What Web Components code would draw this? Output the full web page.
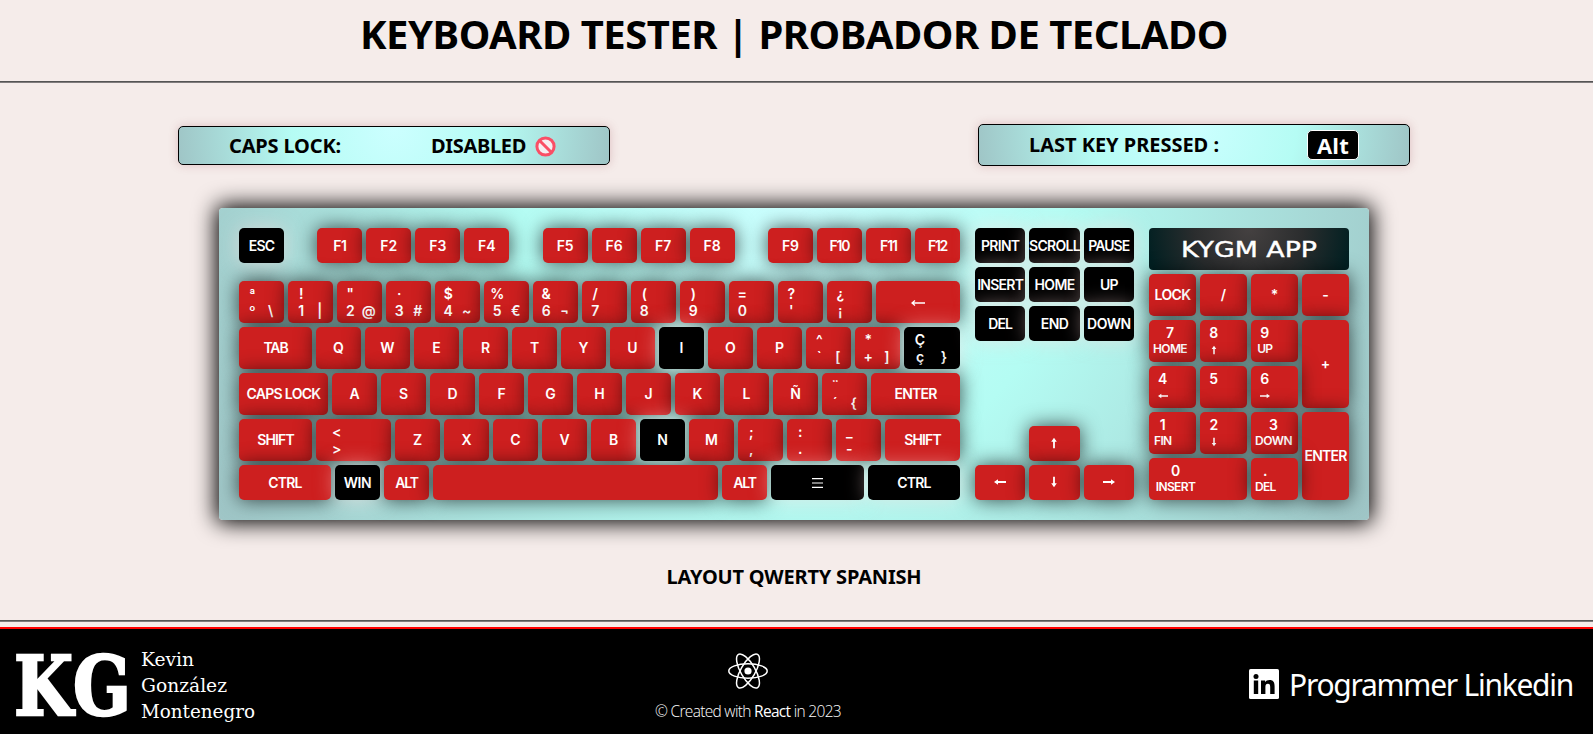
<!DOCTYPE html>
<html lang="en">
<head>
<meta charset="utf-8">
<title>Keyboard Tester</title>
<style>
  html, body { margin: 0; height: 100%; }
  body { background: #f5ecea; color: #000; font-family: "Noto Sans", "Open Sans", sans-serif; overflow: hidden; }
</style>
</head>
<body>
<tester-app></tester-app>
<script>
const define = (name, html, setup) => {
  const template = document.createElement('template');
  template.innerHTML = html.trim();
  customElements.define(name, class extends HTMLElement {
    connectedCallback() {
      if (this.shadowRoot) return;
      this.attachShadow({ mode: 'open' }).append(template.content.cloneNode(true));
      if (setup) setup(this, this.shadowRoot);
    }
  });
};

/* Text set to an exact measure, by tracking or by horizontal scale */
define('fit-text', `<style>
    :host { display: inline-block; white-space: normal; text-align: left; }
    span { display: inline-block; white-space: pre; transform-origin: 0 50%; vertical-align: top; }
  </style><span><slot></slot></span>`, (host, root) => {
  const span = root.querySelector('span');
  const want = parseFloat(host.getAttribute('w'));
  if (!want) return;
  const natural = span.getBoundingClientRect().width;
  host.style.width = want + 'px';
  if (host.hasAttribute('scale')) span.style.transform = 'scaleX(' + want / natural + ')';
  else span.style.letterSpacing = (want - natural) / (host.textContent.length) + 'px';
});

const arrows = {
  left: 'M0 6L4 3.2V5.1H12V6.9H4V8.8Z', right: 'M12 6L8 3.2V5.1H0V6.9H8V8.8Z',
  up: 'M6 .8L8.8 4.8H6.9V11.2H5.1V4.8H3.2Z', down: 'M6 11.2L8.8 7.2H6.9V.8H5.1V7.2H3.2Z'
};
const glyph = t => {
  if (arrows[t]) return '<svg viewBox="0 0 12 12" fill="#fff"><path d="' + arrows[t] + '"/></svg>';
  if (t === 'back') return '<svg class="wide" viewBox="0 0 14 10" fill="none" stroke="#fff" stroke-width="1.3"><path d="M.8 6H14M4 3.6L1 6L4 8.4"/></svg>';
  if (t === 'menu') return '<svg class="menu" viewBox="0 0 11 11" fill="none" stroke="#fff" stroke-width="1.2"><path d="M0 1.6H11M0 6H11M0 10.3H11"/></svg>';
  return null;
};
const widths = { TAB: 24, ESC: 25.5, 'CAPS LOCK': 74, SHIFT: 36.5, CTRL: 33.5, WIN: 27.5, ALT: 22.5, ENTER: 42, PRINT: 38.5,
  SCROLL: 51, PAUSE: 41, INSERT: 46, HOME: 40, UP: 17.5, DEL: 24, END: 27.5, DOWN: 43.5, LOCK: 36, F1: 13, F10: 20, F11: 17, F12: 19 };
const small = { HOME: 34, UP: 15, FIN: 17.5, DOWN: 37, INSERT: 39.5, DEL: 20.5 };

define('kb-key', `<style>
    :host { display: flex; box-sizing: border-box; align-items: center; justify-content: center; min-width: 0; padding-bottom: 1px;
      border-radius: 5px; background: #cd1f1f; color: #fff; font: 600 14px/17px Inter, sans-serif;
      box-shadow: 0 0 20px rgba(0,0,0,.7); white-space: pre; }
    :host([on]) { background: #000; box-shadow: 0 0 20px rgba(255,218,218,.52); }
    :host([multi]) { display: grid; grid-template-columns: 1fr 1fr; grid-template-rows: 17px 17px; padding: 4px;
      align-content: start; align-items: center; justify-items: center; justify-content: stretch; }
    .s { font-weight: 600; font-size: 12px; line-height: 15px; margin-top: -2px; }
    svg { width: 12px; height: 12px; display: block; }
    svg.wide { width: 14px; height: 10px; }
    svg.menu { width: 11px; height: 11px; }
    .s svg { width: 10px; height: 10px; margin-top: 3px; }
  </style>`, (host, root) => {
  const parts = JSON.parse(host.getAttribute('label'));
  const pad = host.hasAttribute('pad');
  if (parts.length > 1) host.setAttribute('multi', '');
  parts.forEach((t, i) => {
    const box = document.createElement('div');
    const g = glyph(t);
    const sub = pad && i === 2;
    if (sub) box.className = 's';
    root.append(box);
    if (g) box.innerHTML = g;
    else {
      const w = sub ? small[t] : widths[t];
      if (w) {
        const f = document.createElement('fit-text');
        f.setAttribute('w', w);
        f.textContent = t;
        box.append(f);
      } else box.textContent = t;
    }
  });
});

const W = 45;
const key = (label, w = W, on = false, extra = '') => {
  const l = JSON.stringify([].concat(label)).replace(/&/g, '&amp;').replace(/"/g, '&quot;');
  return `<kb-key label="${l}" ${on ? 'on' : ''} ${extra} ${w ? 'style="width:' + w + 'px"' : ''}></kb-key>`;
};
const row = (...k) => '<div class="row">' + k.join('') + '</div>';
/* legend order in a multi key: shifted, (blank), base, alt */
const m = (a, b, c = '') => [a, '', b, c];
const letters = (s, on = '') => [...s].map(c => key(c, W, c === on)).join('');

define('kb-board', `<style>
    :host { display: flex; box-sizing: border-box; width: 1150px; height: 312px; padding: 20px; gap: 15px; border-radius: 4px;
      background: radial-gradient(circle at top, #cff 0%, #b4fcf3 42%, #9fc5c6 100%);
      box-shadow: 0 0 22px 3px #000; }
    .main { width: 721px; display: flex; flex-direction: column; gap: 4px; }
    .row { display: flex; gap: 4px; height: 42px; }
    .row.f { height: 35px; justify-content: space-between; margin-bottom: 14px; }
    .row.f div { display: flex; gap: 4px; }
    .row:last-child { height: 35px; }
    .nav { width: 159px; display: grid; grid-template-columns: repeat(3, 1fr); grid-template-rows: 35px 35px 35px 116px 35px; gap: 4px; }
    .nav .up { grid-area: 4 / 2; align-self: end; height: 35px; }
    .nav .l { grid-area: 5 / 1; }
    .nav .d { grid-area: 5 / 2; }
    .nav .r { grid-area: 5 / 3; }
    .pad { width: 200px; display: grid; grid-template-columns: repeat(4, 47px); grid-template-rows: repeat(6, 42px); gap: 4px; }
    .brand { grid-column: span 4; border-radius: 4px; background: radial-gradient(circle at top, #454141 0%, #2b2d2e 50%, #022022 95%);
      display: flex; align-items: center; justify-content: center; color: #fff; font: 500 21px/24px "DejaVu Sans", sans-serif; -webkit-text-stroke: .4px #fff; }
    .brand fit-text { position: relative; top: 1px; }
  </style>
  <div class="main">
    <div class="row f">${key('ESC', W, true)}
      <div>${['F1','F2','F3','F4'].map(k => key(k)).join('')}</div>
      <div>${['F5','F6','F7','F8'].map(k => key(k)).join('')}</div>
      <div>${['F9','F10','F11','F12'].map(k => key(k)).join('')}</div>
    </div>
    ${row(...[['ª','º','\\'],['!','1','|'],['"','2','@'],['·','3','#'],['$','4','~'],['%','5','€'],['&','6','¬'],['/','7'],['(','8'],[')','9'],['=','0'],['?',"'"],['¿','¡']].map(a => key(m(...a))), key('back', 84))}
    ${row(key('TAB', 73), letters('QWERTYUIOP', 'I'), key(m('^','`','[')), key(m('*','+',']')), key(m('Ç','ç','}'), 56, true))}
    ${row(key('CAPS LOCK', 89), letters('ASDFGHJKLÑ'), key(m('¨','´','{')), key('ENTER', 89))}
    ${row(key('SHIFT', 73), key(m('<','>'), 75), letters('ZXCVBNM', 'N'), key(m(';',',')), key(m(':','.')), key(m('_','-')), key('SHIFT', 75))}
    ${row(key('CTRL', 92), key('WIN', W, true), key('ALT'), key('', 285), key('ALT'), key('menu', 93, true), key('CTRL', 92, true))}
  </div>
  <div class="nav">
    ${['PRINT','SCROLL','PAUSE','INSERT','HOME','UP','DEL','END','DOWN'].map(k => key(k, 0, true)).join('')}
    ${key('up', 0, false, 'class="up"')}
    ${key('left', 0, false, 'class="l"')}${key('down', 0, false, 'class="d"')}${key('right', 0, false, 'class="r"')}
  </div>
  <div class="pad">
    <div class="brand"><fit-text w="136" scale>KYGM APP</fit-text></div>
    ${key('LOCK', 0)}${key('/', 0)}${key('*', 0)}${key('-', 0)}
    ${key(m('7','HOME'), 0, false, 'pad')}${key(m('8','up'), 0, false, 'pad')}${key(m('9','UP'), 0, false, 'pad')}<kb-key label='["+"]' style="grid-row: span 2"></kb-key>
    ${key(m('4','left'), 0, false, 'pad')}${key(m('5',''), 0, false, 'pad')}${key(m('6','right'), 0, false, 'pad')}
    ${key(m('1','FIN'), 0, false, 'pad')}${key(m('2','down'), 0, false, 'pad')}${key(m('3','DOWN'), 0, false, 'pad')}<kb-key label='["ENTER"]' style="grid-row: span 2"></kb-key>
    <kb-key label='["0","","INSERT",""]' pad style="grid-column: span 2"></kb-key>${key(m('.','DEL'), 0, false, 'pad')}
  </div>`);

define('status-panel', `<style>
    :host { display: flex; box-sizing: border-box; width: 432px; align-items: center; justify-content: space-between;
      padding: 0 52px 0 50px; border: 1px solid #000; border-radius: 5px; font: 700 20px/24px "Noto Sans", sans-serif;
      background: radial-gradient(circle at top, #cff 0%, #b5fcf4 47%, #9fc5c6 100%); box-shadow: 0 0 10px rgba(150,60,70,.25); }
  </style><slot></slot>`);

define('key-cap', `<style>
    :host { display: flex; box-sizing: border-box; width: 52px; height: 30px; align-items: center; justify-content: center;
      border: 1px solid #fff; border-radius: 5px; background: #000; color: #fff; font: 700 22px/28px "Open Sans", sans-serif; }
  </style><slot></slot>`);

define('page-rule', `<style>:host { display: block; height: 2px; flex: none; background: linear-gradient(#555 50%, #807c7d 50%); }</style>`);

define('site-footer', `<style>
    :host { display: flex; box-sizing: border-box; height: 107px; border-top: 2px solid #f00; background: #000; color: #fff; }
    .brand { display: flex; width: 545px; padding-left: 15px; }
    .logo { width: 126px; font: 700 82px/114px "DejaVu Serif", serif; height: 105px; -webkit-text-stroke: 2.5px #fff; }
    .logo fit-text { margin-left: -1px; }
    .names { display: flex; flex-direction: column; padding-top: 17px; font: 400 19px/26px "DejaVu Serif", serif; }
    .made { width: 376px; display: flex; flex-direction: column; align-items: center; padding-top: 22px; font: 300 15.5px/20px "Open Sans", sans-serif; }
    .made b { font-weight: 400; }
    .made svg { flex: none; margin-bottom: 10px; }
    .link { flex: 1; display: flex; justify-content: flex-end; align-items: flex-start; padding: 33px 20px 0 0; font: 400 30px/46px "Noto Sans", sans-serif; }
    .link svg { flex: none; margin: 7px 10px 0 0; }
  </style>
  <div class="brand">
    <div class="logo"><fit-text w="117" scale>KG</fit-text></div>
    <div class="names"><fit-text w="53" scale>Kevin</fit-text><fit-text w="86" scale>González</fit-text><fit-text w="114" scale>Montenegro</fit-text></div>
  </div>
  <div class="made">
    <svg width="40" height="40" viewBox="-20 -20 40 40" fill="none" stroke="#fff" stroke-width="1.5">
      <ellipse rx="19.2" ry="7.2"/><ellipse rx="19.2" ry="7.2" transform="rotate(60)"/><ellipse rx="19.2" ry="7.2" transform="rotate(120)"/>
      <circle r="3.6" fill="#fff" stroke="none"/></svg>
    <fit-text w="186">© Created with <b>React</b> in 2023</fit-text>
  </div>
  <div class="link">
    <svg width="30" height="30" viewBox="0 0 30 30"><rect width="30" height="30" rx="1.6" fill="#fff"/>
      <circle cx="7" cy="7.4" r="2.5"/><path d="M4.8 11.4H9.2V25H4.8ZM12 11.4H16.1V13.3C16.9 12 18.5 11.1 20.5 11.1C24.6 11.1 25.6 13.7 25.6 17.5V25H21.2V18.3C21.2 16.5 21 14.8 18.9 14.8C16.8 14.8 16.4 16.4 16.4 18.2V25H12Z"/></svg>
    <fit-text w="284">Programmer Linkedin</fit-text>
  </div>`);

define('tester-app', `<style>
    :host { display: flex; flex-direction: column; height: 734px; }
    h1 { margin: 0; height: 81px; padding-right: 5px; text-align: center; font: 700 40px/67px "Noto Sans", sans-serif; }
    .status { display: flex; justify-content: space-between; align-items: center; height: 42px; padding: 41px 183px 42px 178px; }
    .caps { height: 39px; padding-right: 53px; }
    .caps fit-text { margin-top: 2px; }
    .last { height: 42px; padding-right: 50px; }
    .off { display: flex; align-items: center; gap: 9px; }
    .off svg { margin-top: 2px; }
    kb-board { margin-left: 219px; }
    h2 { margin: 0; height: 100px; padding: 0 5px 0 0; text-align: center; font: 700 20px/113px "Noto Sans", sans-serif; }
    page-rule + site-footer { margin-top: 5px; }
  </style>
  <h1><fit-text w="868">KEYBOARD TESTER | PROBADOR DE TECLADO</fit-text></h1>
  <page-rule></page-rule>
  <div class="status">
    <status-panel class="caps"><fit-text w="112">CAPS LOCK:</fit-text>
      <span class="off"><fit-text w="95">DISABLED</fit-text>
      <svg width="21" height="21" viewBox="0 0 21 21"><circle cx="10.5" cy="10.5" r="8.6" fill="#f6eef2" stroke="#fa4f66" stroke-width="3"/><path d="M4.5 4.5L16.5 16.5" stroke="#fa4f66" stroke-width="3"/></svg></span>
    </status-panel>
    <status-panel class="last"><fit-text w="190">LAST KEY PRESSED :</fit-text><key-cap><fit-text w="32">Alt</fit-text></key-cap></status-panel>
  </div>
  <kb-board></kb-board>
  <h2><fit-text w="255">LAYOUT QWERTY SPANISH</fit-text></h2>
  <page-rule></page-rule>
  <site-footer></site-footer>`);
</script>
</body>
</html>
